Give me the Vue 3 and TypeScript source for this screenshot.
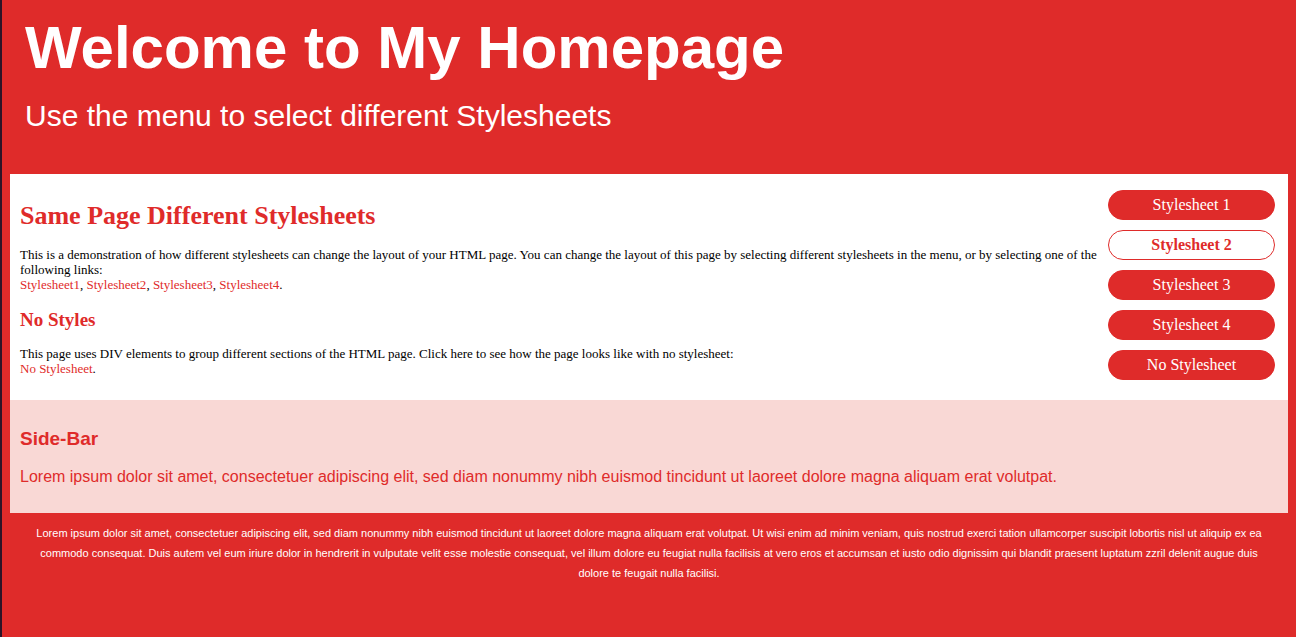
<script setup lang="ts">
import { ref } from 'vue'

const sheets: string[] = ['Stylesheet 1', 'Stylesheet 2', 'Stylesheet 3', 'Stylesheet 4', 'No Stylesheet']
const links: string[] = ['Stylesheet1', 'Stylesheet2', 'Stylesheet3', 'Stylesheet4']
const active = ref<number>(1)
</script>

<template>
  <div class="page">
    <header class="header">
      <h1>Welcome to My Homepage</h1>
      <p>Use the menu to select different Stylesheets</p>
    </header>

    <div class="body">
      <main class="content">
        <h2>Same Page Different Stylesheets</h2>
        <p>
          This is a demonstration of how different stylesheets can change the layout of your HTML page. You can change the layout of this page by selecting different stylesheets in the menu, or by selecting one of the following links:<br />
          <template v-for="(link, i) in links" :key="link"><a href="#" @click.prevent="active = i">{{ link }}</a>{{ i < links.length - 1 ? ', ' : '.' }}</template>
        </p>
        <h3>No Styles</h3>
        <p>
          This page uses DIV elements to group different sections of the HTML page. Click here to see how the page looks like with no stylesheet:<br />
          <a href="#" @click.prevent="active = 4">No Stylesheet</a>.
        </p>
      </main>
      <nav class="menu" aria-label="Stylesheets">
        <button
          v-for="(sheet, i) in sheets"
          :key="sheet"
          type="button"
          :class="{ active: i === active }"
          :aria-pressed="i === active"
          @click="active = i"
        >{{ sheet }}</button>
      </nav>
    </div>

    <aside class="sidebar">
      <h3>Side-Bar</h3>
      <p>Lorem ipsum dolor sit amet, consectetuer adipiscing elit, sed diam nonummy nibh euismod tincidunt ut laoreet dolore magna aliquam erat volutpat.</p>
    </aside>

    <footer class="footer">
      Lorem ipsum dolor sit amet, consectetuer adipiscing elit, sed diam nonummy nibh euismod tincidunt ut laoreet dolore magna aliquam erat volutpat. Ut wisi enim ad minim veniam, quis nostrud exerci tation ullamcorper suscipit lobortis nisl ut aliquip ex ea commodo consequat. Duis autem vel eum iriure dolor in hendrerit in vulputate velit esse molestie consequat, vel illum dolore eu feugiat nulla facilisis at vero eros et accumsan et iusto odio dignissim qui blandit praesent luptatum zzril delenit augue duis dolore te feugait nulla facilisi.
    </footer>
  </div>
</template>

<style>
body {
  margin: 0;
  background: #df2b2a;
}
</style>

<style scoped>
.page {
  box-sizing: border-box;
  min-height: 100vh;
  padding: 0 8px;
  border-left: 2px solid #2c1427;
  background: #df2b2a;
  font-family: "Liberation Sans", Arial, sans-serif;
}

h1, h2, h3, p {
  margin: 0;
}

.header {
  padding: 14px 15px 41px;
  color: #fff;
}

.header h1 {
  margin-bottom: 17px;
  font-size: 60px;
  line-height: 68px;
}

.header p {
  font-size: 30px;
  line-height: 34px;
}

.body {
  display: flex;
  gap: 6px;
  padding: 0 13px 0 10px;
  background: #fff;
  font-family: "Liberation Serif", "Times New Roman", serif;
}

.content {
  flex: 1;
  padding: 27px 0 24px;
  color: #000;
  font-size: 13px;
  line-height: 15px;
}

.content h2 {
  margin-bottom: 16px;
  color: #df2b2a;
  font-size: 26px;
  line-height: 30px;
}

.content h3 {
  margin: 16px 0 14px;
  color: #df2b2a;
  font-size: 19px;
  line-height: 24px;
}

.content a {
  color: #df2b2a;
  text-decoration: none;
}

.menu {
  display: flex;
  flex-direction: column;
  gap: 10px;
  width: 167px;
  padding: 16px 0;
}

.menu button {
  height: 30px;
  padding: 0;
  border: 1px solid #df2b2a;
  border-radius: 15px;
  background: #df2b2a;
  color: #fff;
  font-family: inherit;
  font-size: 16px;
  line-height: 18px;
  cursor: pointer;
}

.menu button.active {
  background: #fff;
  color: #df2b2a;
  font-weight: bold;
}

.sidebar {
  padding: 28px 10px 27px;
  background: #f9d8d5;
  color: #df2b2a;
}

.sidebar h3 {
  margin-bottom: 18px;
  font-size: 19px;
  line-height: 22px;
}

.sidebar p {
  font-size: 16px;
  line-height: 18px;
}

.footer {
  padding: 10px 15px;
  color: #fff;
  font-size: 11px;
  line-height: 20px;
  text-align: center;
}
</style>
